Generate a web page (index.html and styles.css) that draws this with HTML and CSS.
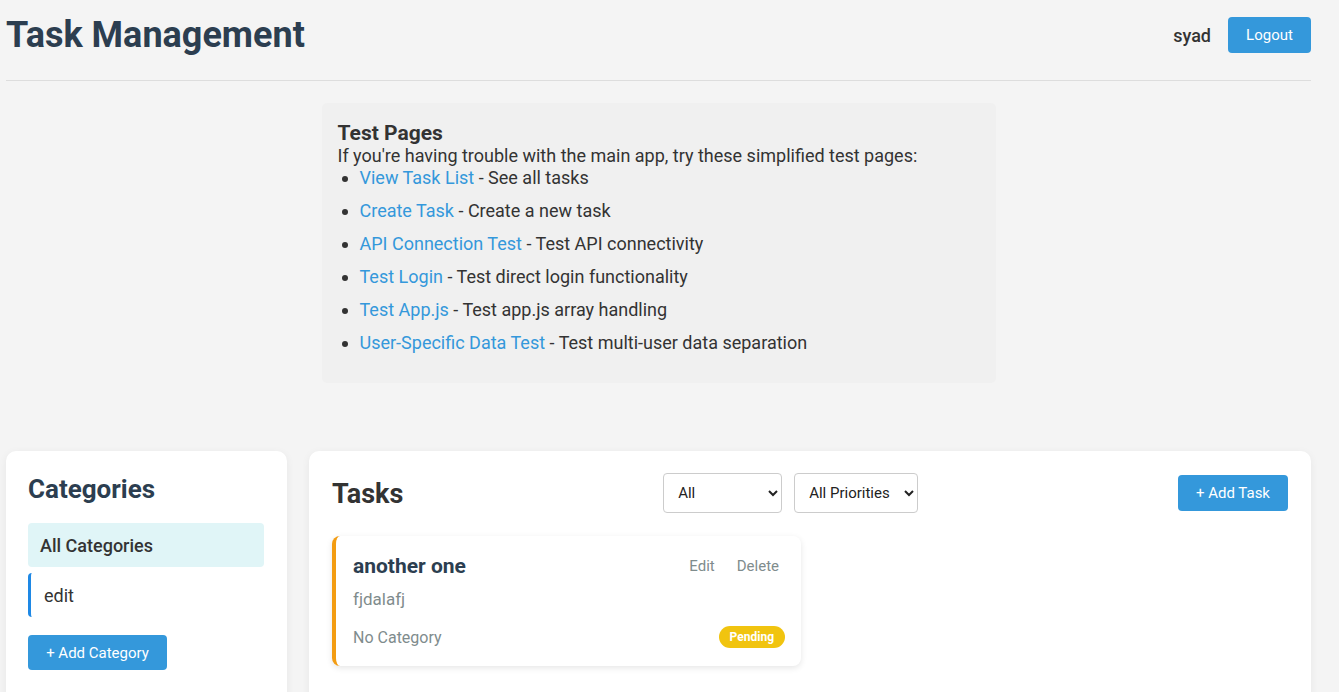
FILE: index.html
```html
<!DOCTYPE html>
<html>
<head>
<meta charset="utf-8">
<link rel="stylesheet" href="styles.css">
</head>
<body>
<div class="app">
  <header class="header">
    <h1 class="title">Task Management</h1>
    <div class="user">
      <span class="username">syad</span>
      <button class="btn btn-logout">Logout</button>
    </div>
  </header>

  <section class="test-pages">
    <h3 class="tp-title">Test Pages</h3>
    <p class="tp-intro">If you're having trouble with the main app, try these simplified test pages:</p>
    <ul class="tp-list">
      <li><a href="#">View Task List</a> - See all tasks</li>
      <li><a href="#">Create Task</a> - Create a new task</li>
      <li><a href="#">API Connection Test</a> - Test API connectivity</li>
      <li><a href="#">Test Login</a> - Test direct login functionality</li>
      <li><a href="#">Test App.js</a> - Test app.js array handling</li>
      <li><a href="#">User-Specific Data Test</a> - Test multi-user data separation</li>
    </ul>
  </section>

  <main class="main">
    <aside class="card categories">
      <h2 class="card-title">Categories</h2>
      <div class="cat-item cat-active">All Categories</div>
      <div class="cat-item cat-edit">edit</div>
      <button class="btn btn-add-cat">+ Add Category</button>
    </aside>

    <section class="card tasks">
      <div class="tasks-head">
        <h2 class="tasks-title">Tasks</h2>
        <div class="filters">
          <select class="sel sel-status"><option>All</option></select>
          <select class="sel sel-prio"><option>All Priorities</option></select>
        </div>
        <button class="btn btn-add-task">+ Add Task</button>
      </div>
      <div class="task-grid">
        <div class="task">
          <div class="task-top">
            <h3 class="task-name">another one</h3>
            <div class="task-actions">
              <span>Edit</span>
              <span>Delete</span>
            </div>
          </div>
          <p class="task-desc">fjdalafj</p>
          <div class="task-foot">
            <span class="task-cat">No Category</span>
            <span class="badge">Pending</span>
          </div>
        </div>
      </div>
    </section>
  </main>
</div>
</body>
</html>
```

FILE: styles.css
```css
* { box-sizing: border-box; }
html, body { margin: 0; padding: 0; }
body {
  background: #f4f4f4;
  font-family: Roboto, "Liberation Sans", Arial, sans-serif;
  color: #333;
  overflow: hidden;
}
.app {
  margin: 0 28px 0 6px;
}
.header {
  display: flex;
  justify-content: space-between;
  align-items: center;
  height: 81px;
  border-bottom: 1px solid #ddd;
}
.title {
  margin: 0;
  font-size: 36px;
  font-weight: 700;
  color: #2c3e50;
  position: relative;
  top: -5px;
}
.user {
  display: flex;
  align-items: center;
  gap: 17px;
  position: relative;
  top: -5px;
}
.username {
  font-size: 18px;
  font-weight: 500;
  color: #333;
}
.btn {
  border: none;
  background: #3498db;
  color: #fff;
  font-family: Roboto, "Liberation Sans", Arial, sans-serif;
  border-radius: 4px;
  cursor: pointer;
}
.btn-logout {
  width: 83px;
  height: 36px;
  font-size: 15px;
}
.test-pages {
  width: 674px;
  margin: 22px auto 0;
  background: #f0f0f0;
  border-radius: 5px;
  padding: 18px 16px 29px;
}
.tp-title {
  margin: 0;
  font-size: 21px;
  font-weight: 700;
  color: #333;
  line-height: 24px;
}
.tp-intro {
  margin: 0;
  font-size: 18px;
  line-height: 22px;
  color: #333;
}
.tp-list {
  margin: 0;
  padding-left: 22px;
  list-style: disc;
}
.tp-list li {
  font-size: 18px;
  line-height: 22px;
  margin-bottom: 11px;
  color: #333;
}
.tp-list li:last-child { margin-bottom: 0; }
.tp-list a {
  color: #3498db;
  text-decoration: none;
}
.main {
  display: grid;
  grid-template-columns: 281px 1fr;
  gap: 22px;
  margin-top: 68px;
}
.card {
  background: #fff;
  border-radius: 10px;
  box-shadow: 0 2px 8px rgba(0,0,0,0.06);
  min-height: 260px;
}
.categories {
  padding: 22px 23px 22px 22px;
}
.card-title {
  margin: 0 0 18px;
  font-size: 26px;
  line-height: 32px;
  font-weight: 700;
  color: #2c3e50;
}
.cat-item {
  height: 44px;
  display: flex;
  align-items: center;
  padding: 0 12px;
  font-size: 18px;
  color: #333;
  border-radius: 4px;
  margin-bottom: 6px;
}
.cat-active {
  background: #e0f5f7;
  font-weight: 500;
}
.cat-edit {
  border-left: 3px solid #1e88e5;
  padding-left: 13px;
}
.btn-add-cat {
  margin-top: 12px;
  width: 139px;
  height: 35px;
  font-size: 15px;
}
.tasks {
  padding: 22px 23px;
}
.tasks-head {
  display: flex;
  justify-content: space-between;
  align-items: center;
  height: 40px;
}
.tasks-title {
  margin: 0;
  font-size: 27px;
  font-weight: 700;
  color: #333;
  position: relative;
  top: 1px;
}
.filters {
  display: flex;
  gap: 12px;
}
.sel {
  height: 40px;
  border: 1px solid #ccc;
  border-radius: 4px;
  background: #fff;
  font-family: Roboto, "Liberation Sans", Arial, sans-serif;
  font-size: 15px;
  color: #222;
  padding: 0 8px 0 10px;
}
.sel-status { width: 119px; }
.sel-prio { width: 124px; }
.btn-add-task {
  width: 110px;
  height: 36px;
  font-size: 15px;
}
.task-grid {
  display: grid;
  grid-template-columns: 1fr 1fr;
  gap: 18px;
  margin-top: 23px;
}
.task {
  background: #fff;
  border-left: 4px solid #f39c12;
  border-radius: 8px;
  box-shadow: 0 2px 6px rgba(0,0,0,0.1);
  padding: 18px 16px 16px 17px;
  height: 130px;
}
.task-top {
  display: flex;
  justify-content: space-between;
  align-items: center;
}
.task-name {
  margin: 0;
  font-size: 21px;
  font-weight: 700;
  color: #2c3e50;
  line-height: 24px;
}
.task-actions {
  display: flex;
  gap: 22px;
  font-size: 15px;
  color: #7f8c8d;
  padding-right: 6px;
}
.task-desc {
  margin: 10px 0 0;
  font-size: 17px;
  line-height: 22px;
  color: #7f8c8d;
}
.task-foot {
  display: flex;
  justify-content: space-between;
  align-items: center;
  margin-top: 16px;
}
.task-cat {
  font-size: 16px;
  color: #7f8c8d;
}
.badge {
  background: #f1c40f;
  color: #fff;
  font-size: 12px;
  font-weight: 700;
  border-radius: 11px;
  padding: 4px 11px;
  line-height: 14px;
}
```
